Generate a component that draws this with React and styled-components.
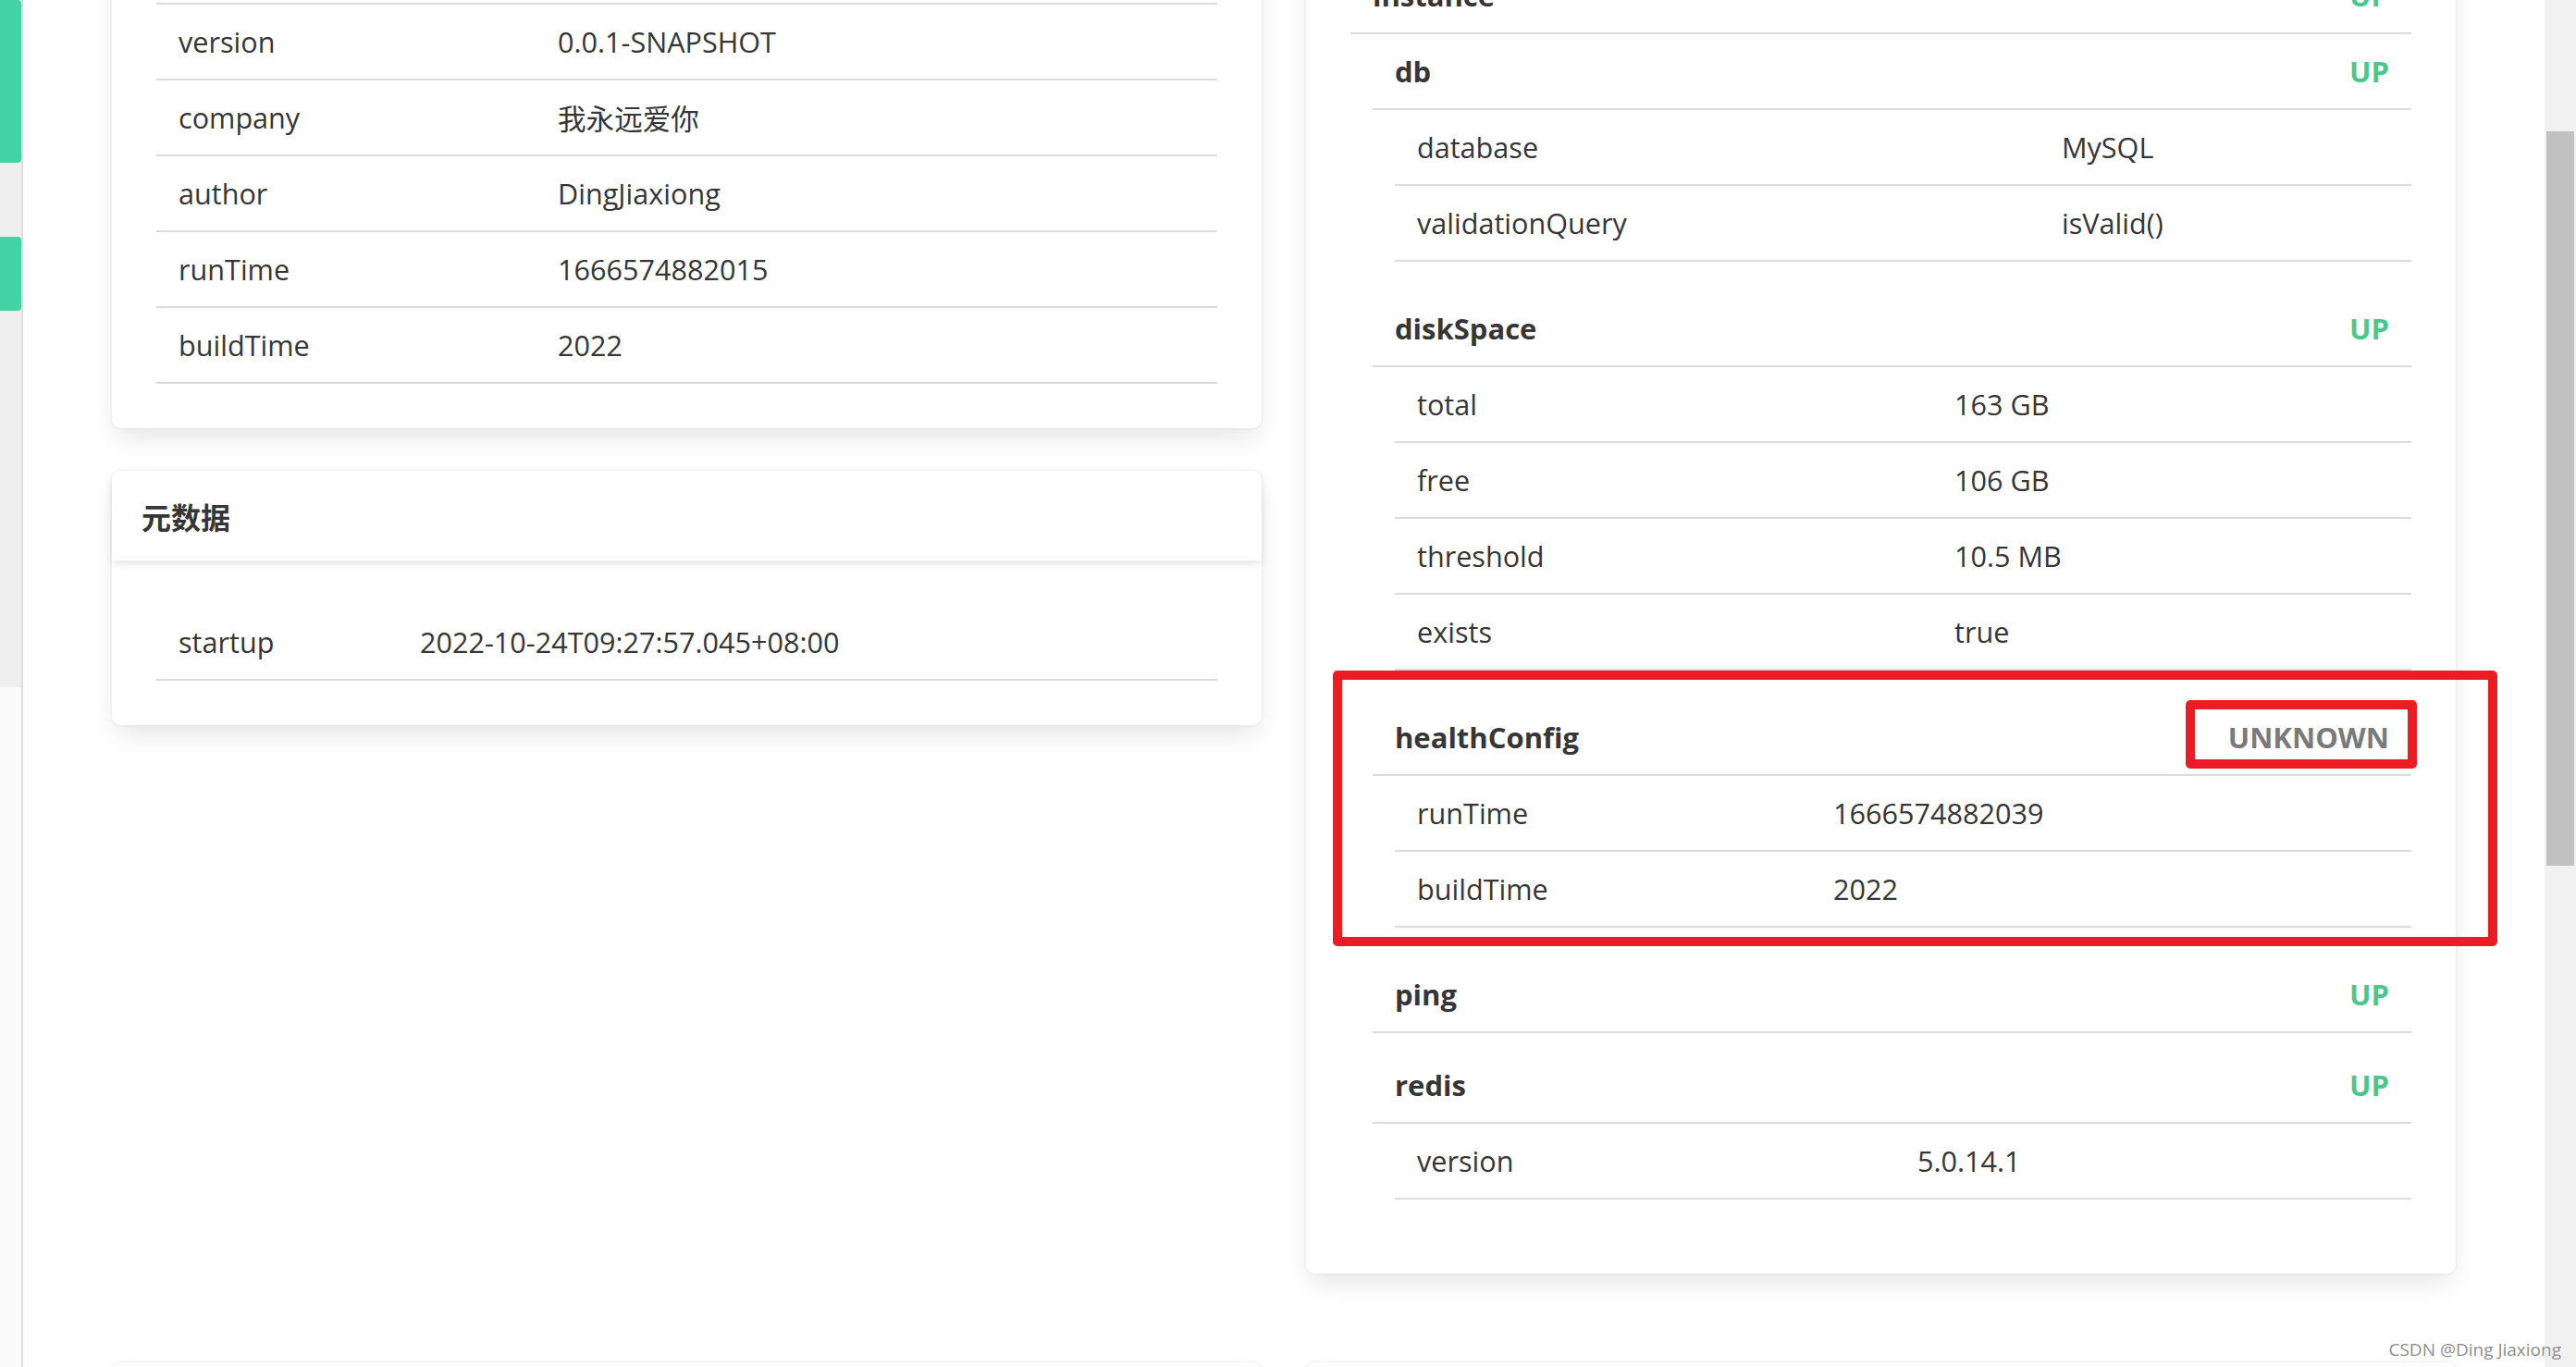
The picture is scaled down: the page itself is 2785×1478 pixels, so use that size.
import React, { useLayoutEffect, useRef } from 'react';
import styled, { createGlobalStyle } from 'styled-components';

const GlobalStyle = createGlobalStyle`
  *, *::before, *::after { box-sizing: border-box; }
  html, body { margin: 0; padding: 0; height: 100%; overflow: hidden; background: #fff; }
  body {
    font-family: "Open Sans", "Noto Sans CJK SC", sans-serif;
    color: #363636;
    font-size: 30.6px;
  }
  #root { height: 100%; }
`;

const Page = styled.div`
  display: flex;
  height: 100vh;
  width: 100%;
  position: relative;
`;

const Sidebar = styled.nav`
  flex: 0 0 25px;
  background: #fafafa;
  border-right: 2px solid #dcdcdc;
  display: flex;
  flex-direction: column;
`;

const SideMenu = styled.div`
  height: 743px;
  background: #efefef;
  display: flex;
  flex-direction: column;
`;

const NavItem = styled.div`
  height: ${(p) => p.$h}px;
  background: ${(p) => (p.$active ? '#42d3a4' : 'transparent')};
  border-radius: 0 4px 4px 0;
`;

const Main = styled.main`
  flex: 1;
  min-width: 0;
  height: 100%;
  overflow: hidden;
`;

const Content = styled.div`
  padding: 48px 96px 96px;
  display: flex;
  flex-direction: column;
  gap: 96px;
`;

const Columns = styled.div`
  display: grid;
  grid-template-columns: 1fr 1fr;
  column-gap: 48px;
  align-items: start;
`;

const Column = styled.div`
  display: flex;
  flex-direction: column;
  gap: 46px;
`;

const Card = styled.section`
  background: #fff;
  border-radius: 10px;
  box-shadow: 0 14px 28px -4px rgba(10, 10, 10, 0.1), 0 0 0 2px rgba(10, 10, 10, 0.02);
`;

const CardHeader = styled.header`
  height: 97px;
  display: flex;
  align-items: center;
  padding: 0 32px;
  font-weight: 700;
  font-size: 32px;
  border-radius: 10px 10px 0 0;
  box-shadow: 0 4px 8px rgba(10, 10, 10, 0.1);
`;

const CardBody = styled.div`
  padding: ${(p) => p.$top || 48}px 48px 48px;
`;

const KVTable = styled.div`
  display: flex;
  flex-direction: column;
  margin-bottom: ${(p) => p.$mb || 0}px;
`;

const KVRow = styled.div`
  display: grid;
  grid-template-columns: ${(p) => p.$key}px 1fr;
  align-items: center;
  height: 82px;
  border-bottom: 2px solid #dbdbdb;
`;

const KeyCell = styled.div`
  padding-left: 24px;
  white-space: nowrap;
`;

const ValueCell = styled.div`
  white-space: nowrap;
`;

const CompBlock = styled.div`
  position: relative;
`;

const CompRow = styled.div`
  position: relative;
  display: flex;
  align-items: center;
  justify-content: space-between;
  height: 82px;
  padding: 0 24px;
  border-bottom: 2px solid #dbdbdb;
  font-weight: 700;
  font-size: 31px;
`;

const Status = styled.span`
  font-weight: 700;
  color: ${(p) => (p.$status === 'UP' ? '#48c78e' : '#7a7a7a')};
`;

const Details = styled.div`
  padding: 0 0 16px 24px;
`;

const Nested = styled.div`
  padding-left: 24px;
`;

const Annotation = styled.div`
  position: absolute;
  border: 10px solid #ed1c24;
  border-radius: 5px;
  pointer-events: none;
`;

const BigBox = styled(Annotation)`
  top: -32px;
  left: -43px;
  right: -93px;
  bottom: 12px;
`;

const SmallBox = styled(Annotation)`
  top: 0;
  right: -6px;
  width: 250px;
  height: 74px;
`;

const ScrollTrack = styled.div`
  flex: 0 0 34px;
  background: #f1f1f1;
  padding: 142px 2px 0 2px;
`;

const ScrollThumb = styled.div`
  height: 794px;
  background: #c1c1c1;
`;

const Watermark = styled.div`
  position: absolute;
  right: 16px;
  bottom: 6px;
  font-family: "Open Sans", sans-serif;
  font-size: 19px;
  color: #8e8e8e;
  text-shadow: 0 0 2px #fff;
  white-space: nowrap;
`;

const KV = ({ rows, keyWidth, mb }) => (
  <KVTable $mb={mb}>
    {rows.map(([k, v]) => (
      <KVRow key={k} $key={keyWidth}>
        <KeyCell>{k}</KeyCell>
        <ValueCell>{v}</ValueCell>
      </KVRow>
    ))}
  </KVTable>
);

const Component = ({ name, status, rows, keyWidth, highlight }) => (
  <CompBlock>
    <CompRow>
      <span>{name}</span>
      <Status $status={status}>{status}</Status>
      {highlight && <SmallBox />}
    </CompRow>
    <Details>
      {rows && rows.length > 0 && <KV rows={rows} keyWidth={keyWidth} mb={16} />}
    </Details>
    {highlight && <BigBox />}
  </CompBlock>
);

const infoRows = [
  ['name', 'admin-client'],
  ['version', '0.0.1-SNAPSHOT'],
  ['company', '我永远爱你'],
  ['author', 'DingJiaxiong'],
  ['runTime', '1666574882015'],
  ['buildTime', '2022'],
];

const components = [
  { name: 'db', status: 'UP', keyWidth: 721, rows: [['database', 'MySQL'], ['validationQuery', 'isValid()']] },
  {
    name: 'diskSpace',
    status: 'UP',
    keyWidth: 605,
    rows: [['total', '163 GB'], ['free', '106 GB'], ['threshold', '10.5 MB'], ['exists', 'true']],
  },
  {
    name: 'healthConfig',
    status: 'UNKNOWN',
    keyWidth: 474,
    highlight: true,
    rows: [['runTime', '1666574882039'], ['buildTime', '2022']],
  },
  { name: 'ping', status: 'UP', rows: [] },
  { name: 'redis', status: 'UP', keyWidth: 565, rows: [['version', '5.0.14.1']] },
];

export default function App() {
  const mainRef = useRef(null);
  useLayoutEffect(() => {
    if (mainRef.current) mainRef.current.scrollTop = 270;
  }, []);

  return (
    <Page>
      <GlobalStyle />
      <Sidebar>
        <SideMenu>
          <NavItem $h={176} $active />
          <NavItem $h={80} />
          <NavItem $h={80} $active />
        </SideMenu>
      </Sidebar>
      <Main ref={mainRef}>
        <Content>
          <Columns>
            <Column>
              <Card>
                <CardHeader>信息</CardHeader>
                <CardBody>
                  <KV rows={infoRows} keyWidth={434} />
                </CardBody>
              </Card>
              <Card>
                <CardHeader>元数据</CardHeader>
                <CardBody>
                  <KV rows={[['startup', '2022-10-24T09:27:57.045+08:00']]} keyWidth={285} />
                </CardBody>
              </Card>
            </Column>
            <Column>
              <Card>
                <CardHeader>健康</CardHeader>
                <CardBody $top={80}>
                  <CompRow>
                    <span>instance</span>
                    <Status $status="UP">UP</Status>
                  </CompRow>
                  <Nested>
                    {components.map((c) => (
                      <Component key={c.name} {...c} />
                    ))}
                  </Nested>
                </CardBody>
              </Card>
            </Column>
          </Columns>
          <Columns>
            <Column>
              <Card>
                <CardHeader>进程</CardHeader>
                <CardBody>
                  <KV rows={[['PID', '12345'], ['Uptime', '0d 0h 5m 12s']]} keyWidth={434} />
                </CardBody>
              </Card>
            </Column>
            <Column>
              <Card>
                <CardHeader>线程</CardHeader>
                <CardBody>
                  <KV rows={[['Live', '38'], ['Daemon', '34']]} keyWidth={434} />
                </CardBody>
              </Card>
            </Column>
          </Columns>
        </Content>
      </Main>
      <ScrollTrack>
        <ScrollThumb />
      </ScrollTrack>
      <Watermark>CSDN @Ding Jiaxiong</Watermark>
    </Page>
  );
}
